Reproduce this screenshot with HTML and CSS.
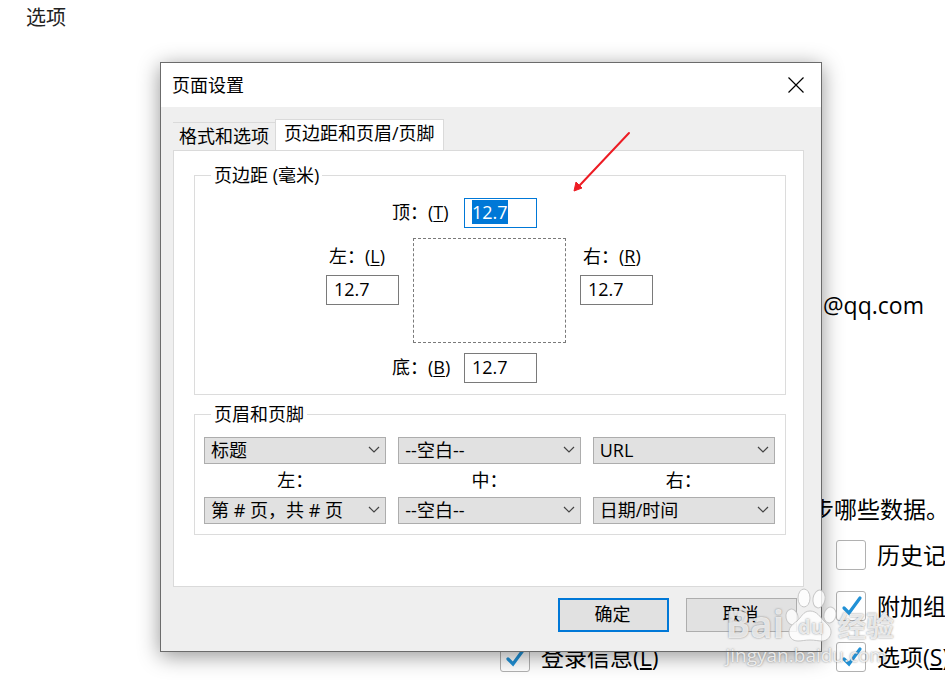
FILE: index.html
```html
<!DOCTYPE html>
<html lang="zh-CN">
<head>
	<meta charset="UTF-8">
	<title>页面设置</title>
	<link rel="stylesheet" href="styles.css">
</head>
<body>
<div class="page">
	<h1 class="page-title">选项</h1>
	<p class="account">@qq.com</p>
	<p class="sync-title">步哪些数据。</p>
	<div class="sync-list">
		<label class="check second"><input type="checkbox"><span>历史记</span></label>
		<label class="check second"><input type="checkbox" checked><span>附加组</span></label>
		<label class="check first"><input type="checkbox" checked><span>登录信息(<u>L</u>)</span></label>
		<label class="check second"><input type="checkbox" checked><span>选项(<u>S</u>)</span></label>
	</div>
</div>

<div class="dialog" role="dialog" aria-labelledby="dialog-title">
	<div class="titlebar">
		<h2 id="dialog-title">页面设置</h2>
		<button class="close" type="button" aria-label="关闭">
			<svg width="16" height="16" viewBox="0 0 16 16"><path d="M.5 .5l15 15M15.5 .5l-15 15" stroke="#000" stroke-width="1.2" fill="none"/></svg>
		</button>
	</div>
	<div class="tabs" role="tablist">
		<button class="tab" type="button" role="tab">格式和选项</button>
		<button class="tab active" type="button" role="tab" aria-selected="true">页边距和页眉/页脚</button>
	</div>
	<div class="panel" role="tabpanel">
		<fieldset>
			<legend>页边距 (毫米)</legend>
			<div class="margins">
				<div class="line">
					<label for="top">顶：(<u>T</u>)</label>
					<input id="top" class="num" type="text" value="12.7">
				</div>
				<div class="side">
					<label for="left">左：(<u>L</u>)</label>
					<input id="left" class="num" type="text" value="12.7">
				</div>
				<div class="paper"></div>
				<div class="side">
					<label for="right">右：(<u>R</u>)</label>
					<input id="right" class="num" type="text" value="12.7">
				</div>
				<div class="line">
					<label for="bottom">底：(<u>B</u>)</label>
					<input id="bottom" class="num" type="text" value="12.7">
				</div>
			</div>
		</fieldset>
		<fieldset>
			<legend>页眉和页脚</legend>
			<div class="headers">
				<select id="hl" aria-label="页眉左"><option>标题</option></select>
				<select id="hc" aria-label="页眉中"><option>--空白--</option></select>
				<select id="hr" aria-label="页眉右"><option>URL</option></select>
				<label for="fl">左：</label>
				<label for="fc">中：</label>
				<label for="fr">右：</label>
				<select id="fl"><option>第 # 页，共 # 页</option></select>
				<select id="fc"><option>--空白--</option></select>
				<select id="fr"><option>日期/时间</option></select>
			</div>
		</fieldset>
	</div>
	<div class="buttons">
		<button class="btn default" type="button">确定</button>
		<button class="btn" type="button">取消</button>
	</div>
	<svg class="arrow" width="60" height="64" viewBox="0 0 60 64">
		<path d="M56 3L7 55" stroke="#ed1c24" stroke-width="2" stroke-linecap="round"/>
		<path d="M1 61L3 52L6 55L9 58Z" fill="#ed1c24" stroke="#ed1c24"/>
	</svg>
</div>

<div class="watermark">
	<div class="brand">
		<span class="bai">Bai</span>
		<span class="paw">
			<svg width="54" height="56" viewBox="0 0 54 56">
				<g fill="#fff" fill-opacity=".8" stroke="#bbb" stroke-opacity=".8">
					<ellipse cx="8" cy="31" rx="6" ry="8" transform="rotate(-12 8 31)"/>
					<ellipse cx="20" cy="12" rx="6" ry="9"/>
					<ellipse cx="35" cy="13" rx="6" ry="9" transform="rotate(10 35 13)"/>
					<ellipse cx="46" cy="29" rx="6" ry="8" transform="rotate(12 46 29)"/>
					<path d="M26 25c7 0 10 6 14 10s7 6 7 11-4 9-9 9c-4 0-7-1-12-1s-8 1-12 1c-6 0-9-4-9-9s4-8 8-11 6-10 13-10z"/>
				</g>
			</svg>
			<span class="du">du</span>
		</span>
		<span class="jingyan">经验</span>
	</div>
	<div class="site">jingyan.baidu.com</div>
</div>
<script>
	var first = document.getElementById('top');
	first.focus();
	first.select();
</script>
</body>
</html>
```
FILE: styles.css
```css
*{
	box-sizing: border-box;
}
body{
	margin: 0;
	min-height: 100vh;
	position: relative;
	overflow: hidden;
	background: #fff;
	color: #000;
	font: 18px/24px "Open Sans", "Noto Sans CJK SC", sans-serif;
}
h1, h2, p{
	margin: 0;
	font-weight: 400;
}
button, input, select{
	margin: 0;
	color: inherit;
	font: inherit;
}
u{
	text-underline-offset: 2px;
}

/* page behind the dialog */
.page{
	font-size: 23px;
	line-height: 32px;
	white-space: nowrap;
}
.page-title{
	padding: 2px 26px;
	font-size: 20px;
	color: #222;
}
.account{
	margin-top: 253px;
	padding-left: 823px;
}
.sync-title{
	margin-top: 172px;
	padding-left: 811px;
}
.sync-list{
	display: grid;
	grid-template-columns: 324px 1fr;
	gap: 21px 12px;
	margin-top: 15px;
	padding-left: 500px;
}
.check{
	display: flex;
	align-items: center;
	gap: 11px;
	height: 30px;
}
.first{
	grid-column: 1;
}
.second{
	grid-column: 2;
}
.check input{
	appearance: none;
	flex: none;
	width: 30px;
	height: 30px;
	border: 1px solid #b1b1b1;
	border-radius: 3px;
	background: #fff;
}
.check input:checked{
	background: url("data:image/svg+xml,%3Csvg xmlns='http://www.w3.org/2000/svg' viewBox='0 0 28 28'%3E%3Cpath d='M7 16l5 5L23 6' fill='none' stroke='%232191d6' stroke-width='3.200' stroke-linecap='round'/%3E%3C/svg%3E") center / 28px no-repeat #fff;
}

/* dialog */
.dialog{
	position: absolute;
	top: 62px;
	left: 160px;
	right: 123px;
	border: 1px solid #6b6b6b;
	background: #efefef;
	box-shadow: 0 4px 20px rgba(0,0,0,.42);
}
.titlebar{
	display: flex;
	justify-content: space-between;
	align-items: center;
	height: 44px;
	padding: 0 17px 1px 11px;
	background: #fff;
}
.titlebar h2{
	font-size: 18px;
}
.close{
	display: flex;
	padding: 0;
	border: 0;
	background: none;
}
.tabs{
	display: flex;
	align-items: flex-end;
	padding: 12px 12px 0;
}
.tab{
	height: 28px;
	padding: 0 6px 2px;
	border: 0;
	border-top: 1px solid #dadada;
	background: #efefef;
	line-height: 24px;
	white-space: nowrap;
}
.tab.active{
	height: 31px;
	padding: 0 8px 4px;
	border: 1px solid #dadada;
	border-bottom: 0;
	background: #fff;
}
.panel{
	margin: 0 17px 0 12px;
	padding: 12px 17px 51px 20px;
	border: 1px solid #dadada;
	background: #fff;
}
fieldset{
	min-width: 0;
	margin: 0;
	padding: 0 10px 10px 9px;
	border: 1px solid #dcdcdc;
}
fieldset + fieldset{
	margin-top: 7px;
}
legend{
	margin-left: 7px;
	padding: 0 3px;
}
.margins{
	display: grid;
	grid-template-columns: 73px 153px 73px;
	justify-content: center;
	gap: 10px 14px;
	padding: 11px 0 1px;
}
.line{
	grid-column: 1 / -1;
	display: flex;
	align-items: center;
	padding-left: 66px;
}
.line label{
	width: 72px;
	padding-bottom: 3px;
}
.side{
	display: flex;
	flex-direction: column;
	gap: 7px;
	padding-top: 6px;
}
.side label{
	padding-left: 3px;
}
.num{
	width: 73px;
	height: 30px;
	padding: 0 6px 2px 7px;
	border: 1px solid #7a7a7a;
	background: #fff;
}
.num:focus{
	border-color: #0078d7;
	outline: 0;
}
.num::selection{
	background: #0078d7;
	color: #fff;
}
.paper{
	height: 105px;
	border: 1px dashed #7a7a7a;
}
.headers{
	display: grid;
	grid-template-columns: repeat(3, 1fr);
	gap: 4px 12px;
	padding-top: 11px;
}
.headers label{
	height: 25px;
	text-align: center;
}
select{
	appearance: none;
	height: 27px;
	padding: 0 24px 2px 6px;
	border: 1px solid #adadad;
	border-radius: 0;
	background: url("data:image/svg+xml,%3Csvg xmlns='http://www.w3.org/2000/svg' viewBox='0 0 12 7'%3E%3Cpath d='M1 1l5 5 5-5' fill='none' stroke='%23444' stroke-width='1.200'/%3E%3C/svg%3E") right 5px top 8px / 12px 7px no-repeat #e1e1e1;
}
.buttons{
	display: flex;
	justify-content: flex-end;
	gap: 17px;
	padding: 11px 24px 19px;
}
.btn{
	width: 111px;
	height: 34px;
	padding: 0 2px 2px 0;
	border: 1px solid #adadad;
	background: #e1e1e1;
}
.btn.default{
	border: 2px solid #0078d7;
}
.arrow{
	position: absolute;
	top: 67px;
	left: 412px;
	fill: none;
}

/* watermark over everything */
.watermark{
	position: absolute;
	top: 586px;
	right: 51px;
	color: rgba(255,255,255,.8);
	text-shadow: 0 0 2px rgba(100,100,100,.8);
	white-space: nowrap;
	pointer-events: none;
}
.brand{
	display: flex;
	align-items: flex-end;
	height: 56px;
	font-weight: 700;
}
.bai{
	font-size: 37px;
	line-height: 36px;
}
.paw{
	position: relative;
	height: 56px;
}
.du{
	position: absolute;
	left: 14px;
	bottom: 3px;
	font-size: 20px;
}
.jingyan{
	font-size: 28px;
	line-height: 32px;
}
.site{
	font-size: 19px;
	line-height: 26px;
}
```
